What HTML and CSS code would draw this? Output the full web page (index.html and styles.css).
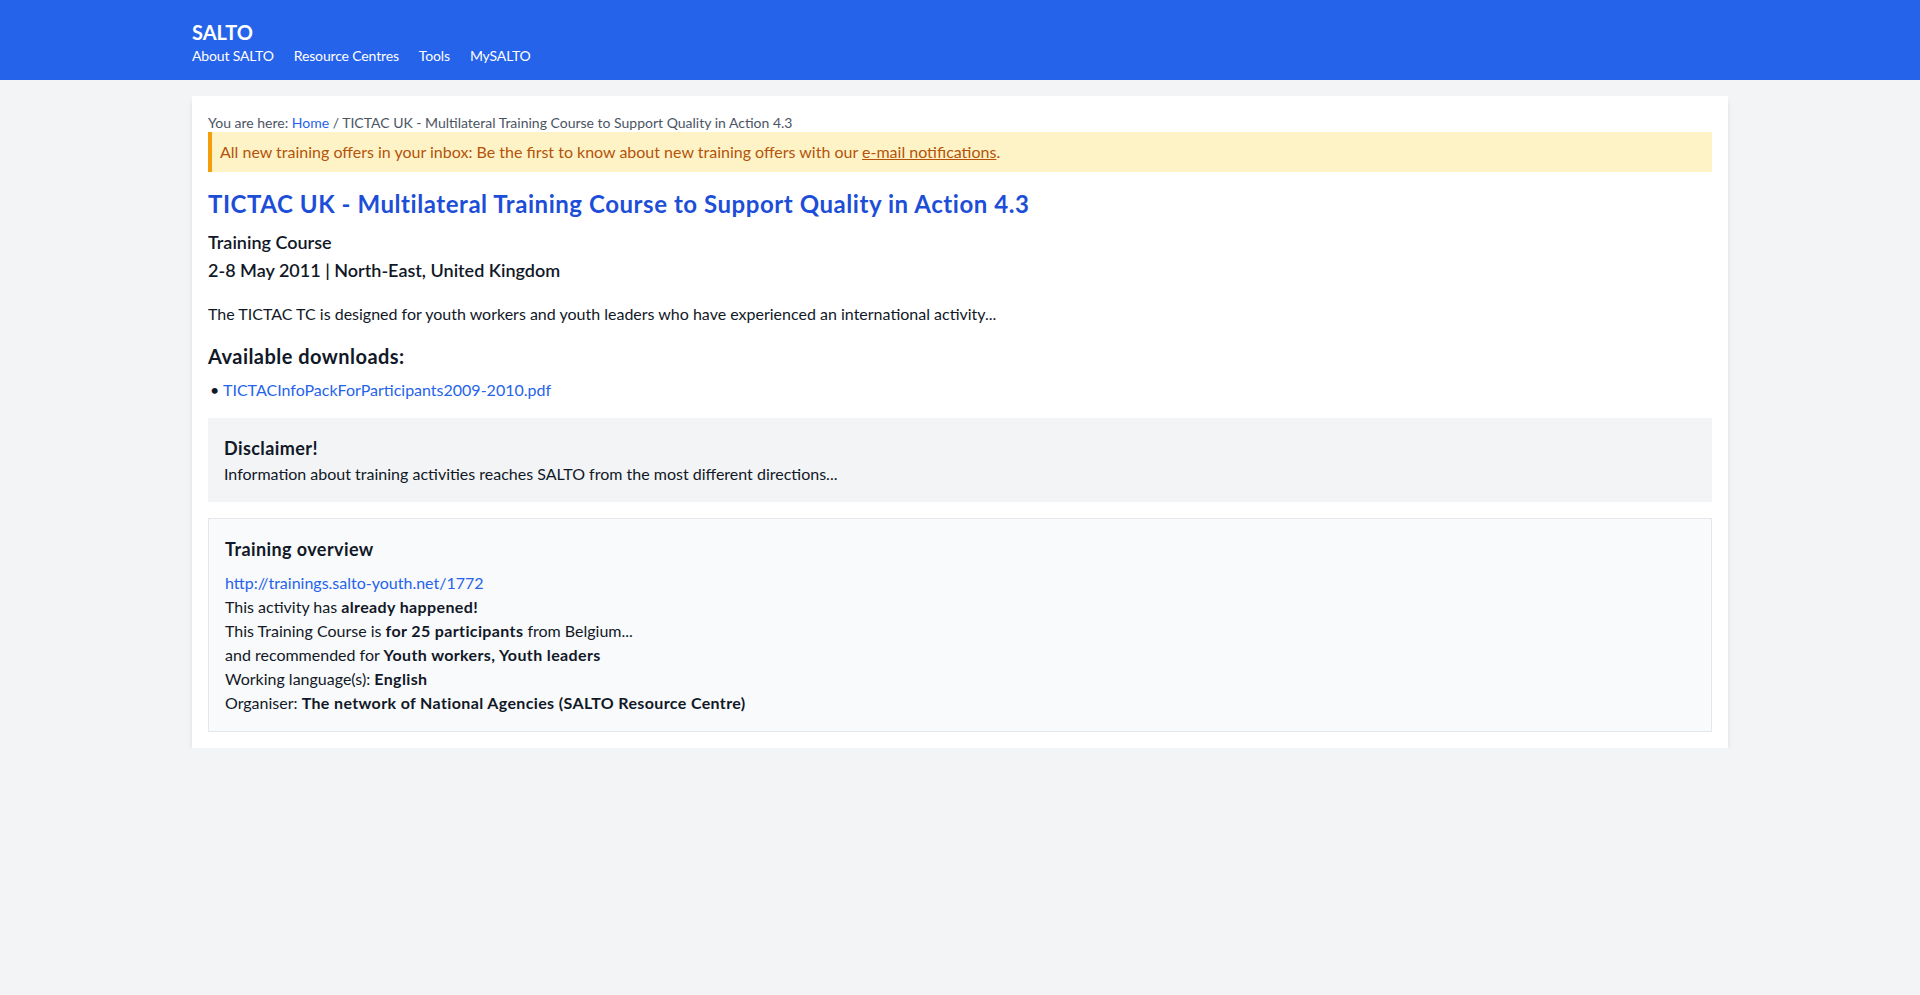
FILE: index.html
```html
<!DOCTYPE html>
<html lang="en">
<head>
<meta charset="utf-8">
<title>TICTAC UK - Multilateral Training Course to Support Quality in Action 4.3 | SALTO</title>
<link rel="stylesheet" href="styles.css">
</head>
<body>
<header class="site-header">
  <div class="container">
    <div class="brand">SALTO</div>
    <nav class="main-nav">
      <a href="#">About SALTO</a>
      <a href="#">Resource Centres</a>
      <a href="#">Tools</a>
      <a href="#">MySALTO</a>
    </nav>
  </div>
</header>
<main class="container main">
  <div class="card">
    <div class="breadcrumb">You are here: <a href="#">Home</a> / TICTAC UK - Multilateral Training Course to Support Quality in Action 4.3</div>
    <div class="notice">All new training offers in your inbox: Be the first to know about new training offers with our <a href="#">e-mail notifications</a>.</div>
    <h1 class="title">TICTAC UK - Multilateral Training Course to Support Quality in Action 4.3</h1>
    <div class="meta">
      <div>Training Course</div>
      <div>2-8 May 2011 | North-East, United Kingdom</div>
    </div>
    <p class="desc">The TICTAC TC is designed for youth workers and youth leaders who have experienced an international activity...</p>
    <h2 class="section-title">Available downloads:</h2>
    <ul class="downloads">
      <li><a href="#">TICTACInfoPackForParticipants2009-2010.pdf</a></li>
    </ul>
    <div class="disclaimer">
      <h3 class="box-title">Disclaimer!</h3>
      <p>Information about training activities reaches SALTO from the most different directions...</p>
    </div>
    <div class="overview">
      <h3 class="box-title">Training overview</h3>
      <div class="overview-lines">
        <div><a href="#">http://trainings.salto-youth.net/1772</a></div>
        <div>This activity has <strong>already happened!</strong></div>
        <div>This Training Course is <strong>for 25 participants</strong> from Belgium...</div>
        <div>and recommended for <strong>Youth workers, Youth leaders</strong></div>
        <div>Working language(s): <strong>English</strong></div>
        <div>Organiser: <strong>The network of National Agencies (SALTO Resource Centre)</strong></div>
      </div>
    </div>
  </div>
</main>
</body>
</html>
```

FILE: styles.css
```css
* { box-sizing: border-box; }
html, body { margin: 0; padding: 0; }
body {
  background: #f3f4f6;
  font-family: Lato, "Noto Sans", "Liberation Sans", sans-serif;
  font-size: 16px;
  line-height: 24px;
  color: #111827;
}
a { color: #2563eb; text-decoration: none; }
h1, h2, h3, p, ul { margin: 0; padding: 0; }

.container {
  max-width: 1536px;
  margin: 0 auto;
}

.site-header {
  background: #2563eb;
  color: #fff;
  padding: 17px 0 14px;
}
.brand {
  font-size: 20px;
  line-height: 28px;
  font-weight: 700;
  padding-top: 1px;
}
.main-nav {
  display: flex;
  gap: 20px;
  font-size: 14px;
  line-height: 20px;
  letter-spacing: -0.15px;
}
.main-nav a { color: #fff; }

.main { padding-top: 16px; }

.card {
  background: #fff;
  padding: 16px;
  box-shadow: 0 4px 6px -1px rgba(0,0,0,0.1), 0 2px 4px -2px rgba(0,0,0,0.1);
}

.breadcrumb {
  font-size: 14px;
  line-height: 20px;
  color: #4b5563;
  padding-top: 1px;
  margin-bottom: -1px;
}

.notice {
  background: #fef3c7;
  border-left: 4px solid #f59e0b;
  color: #b45309;
  padding: 8px;
}
.notice a { color: #b45309; text-decoration: underline; }

.title {
  margin-top: 16px;
  font-size: 24px;
  line-height: 32px;
  font-weight: 700;
  color: #1d4ed8;
  letter-spacing: 0.023em;
}

.meta {
  margin-top: 8px;
  font-size: 18px;
  line-height: 28px;
  font-weight: 600;
}

.desc { margin-top: 18px; }

.section-title {
  margin-top: 16px;
  font-size: 20px;
  line-height: 28px;
  font-weight: 700;
  letter-spacing: 0.023em;
}

.downloads {
  margin-top: 8px;
  list-style: none;
}
.downloads li {
  display: flex;
  padding-left: 2px;
}
.downloads li::before {
  content: "•";
  width: 13px;
  flex: none;
}

.disclaimer {
  margin-top: 16px;
  background: #f3f4f6;
  padding: 16px;
}

.box-title {
  font-size: 18px;
  line-height: 28px;
  font-weight: 700;
  letter-spacing: 0.023em;
}

.overview {
  margin-top: 16px;
  background: #f9fafb;
  border: 1px solid #e5e7eb;
  padding: 16px;
}
.overview-lines { margin-top: 8px; }
.overview strong { font-weight: 700; letter-spacing: 0.023em; }
```
